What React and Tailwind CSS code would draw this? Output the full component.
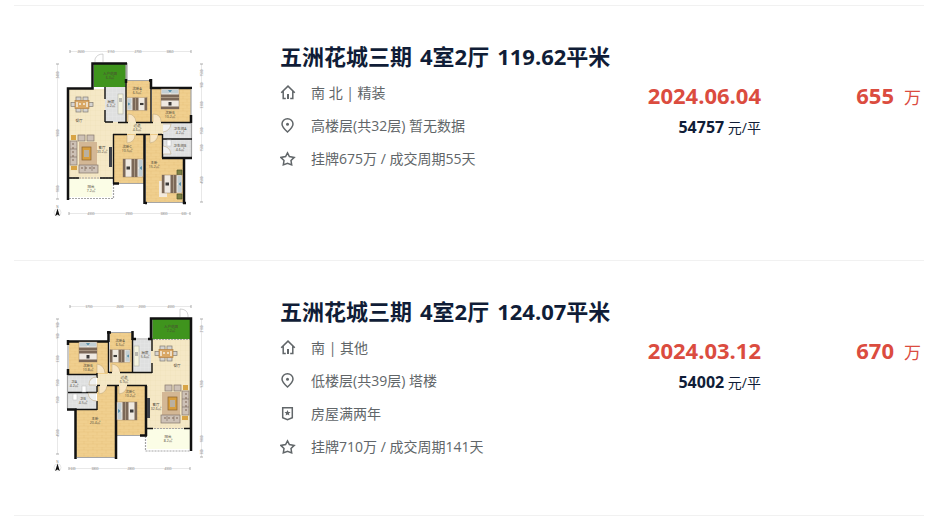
const WOOD = '#f0cf8e';
const FLOOR = '#f5e8c6';
const TILE = '#dfe0e0';
const WALL = '#111111';
const GLASS = '#a5a5a5';

const listings = [
    {
        id: 1,
        community: '五洲花城三期',
        layout: '4室2厅',
        area: '119.62平米',
        date: '2024.06.04',
        unitPrice: '54757',
        total: '655',
        plan: PlanEast,
        facts: [
            { icon: HomeIcon, text: '南 北 | 精装' },
            { icon: PinIcon, text: '高楼层(共32层) 暂无数据' },
            { icon: StarIcon, text: '挂牌675万 / 成交周期55天' },
        ],
    },
    {
        id: 2,
        community: '五洲花城三期',
        layout: '4室2厅',
        area: '124.07平米',
        date: '2024.03.12',
        unitPrice: '54002',
        total: '670',
        plan: PlanWest,
        facts: [
            { icon: HomeIcon, text: '南 | 其他' },
            { icon: PinIcon, text: '低楼层(共39层) 塔楼' },
            { icon: BadgeIcon, text: '房屋满两年' },
            { icon: StarIcon, text: '挂牌710万 / 成交周期141天' },
        ],
    },
];

function Icon({ children }) {
    return (
        <svg viewBox="0 0 16 16" className="h-4 w-4 shrink-0" fill="none" stroke="currentColor" strokeWidth="1.5" aria-hidden="true">
            {children}
        </svg>
    );
}

function HomeIcon() {
    return (
        <Icon>
            <path d="M1.2 7.7 8 1.1l6.800 6.600M3.2 6.300v7.100H5.800M10.200 13.400h2.600V6.300" />
            <path d="M8 9v5" strokeWidth="2" />
        </Icon>
    );
}

function PinIcon() {
    return (
        <Icon>
            <path d="M7.5 14C4.2 11 2 8.600 2 6a5.500 5.200 0 0 1 11 0c0 2.600-2.200 5-5.500 8Z" />
            <circle cx="7.5" cy="6.2" r="1.5" fill="currentColor" stroke="none" />
        </Icon>
    );
}

function BadgeIcon() {
    return (
        <Icon>
            <path d="M2.700 1.700h9.600v10L7.500 13.800l-4.800-2.100Z" />
            <path d="m7.500 4 .9 1.900 2.100.2-1.600 1.400.5 2.100-1.900-1.100-1.900 1.100.5-2.100-1.600-1.400 2.100-.2Z" fill="currentColor" stroke="none" />
        </Icon>
    );
}

function StarIcon() {
    return (
        <Icon>
            <path d="m7.500 1.900 1.900 3.700 4.800.8-3.200 3.100.7 4.400-4.200-1.500-4.200 1.500.7-4.400L.800 6.400l4.800-.8Z" />
        </Icon>
    );
}

// Bed with its head at the top, 18 x 20, turned around its own centre
function Bed({ x, y, turn = 0 }) {
    return (
        <g transform={`translate(${x} ${y}) rotate(${turn})`}>
            <rect x="-9" y="-10" width="18" height="20" fill="#efe9e1" stroke="#9a8468" strokeWidth="0.5" />
            <rect x="-8" y="-9.5" width="7" height="4" fill="#c3cfd4" />
            <rect x="1" y="-9.5" width="7" height="4" fill="#c3cfd4" />
            <path d="m-2-9 2 3 2-3Z" fill="#5c93ad" />
            <rect x="-9" y="-4.5" width="18" height="6" fill="#7b6858" />
            <rect x="-9" y="-2" width="18" height="1" fill="#a89682" />
            <rect x="-1.5" y="3" width="3" height="3.5" fill="#3c3a39" />
            <rect x="-9" y="7.5" width="18" height="2.5" fill="#7b6858" />
        </g>
    );
}

function Dining({ x, y }) {
    return (
        <g transform={`translate(${x} ${y})`} stroke="#827b72" strokeWidth="0.7">
            <rect x="-6" y="-8" width="5" height="15" fill="#d5d3d0" />
            <rect x="1" y="-8" width="5" height="15" fill="#d5d3d0" />
            <rect x="-11" y="-2.5" width="22" height="4" fill="#d5d3d0" />
            <rect x="-7" y="-4.5" width="14" height="8" fill="#d9a765" stroke="#b58144" />
            <path d="M-5-3v5M-3-1h2M1-1h2M5-3v5" stroke="#f5efe2" strokeWidth="1.5" />
        </g>
    );
}

// Sofa set with the long sofa on the left; flip puts it on the right
function Sofa({ x, y, flip }) {
    return (
        <g transform={`translate(${x} ${y}) scale(${flip ? -1 : 1} 1)`}>
            <rect x="-6" y="-12" width="18" height="30" fill="#d3b795" />
            <g fill="#cdc1b6" stroke="#85766a" strokeWidth="0.7">
                <rect x="-15" y="-13" width="7" height="24" />
                <path d="M-15-5h7M-15 3h7" />
                <rect x="-7" y="-19" width="7" height="6" />
                <rect x="2" y="-19" width="7" height="6" />
                <rect x="-6" y="11" width="19" height="8" />
                <path d="M0 12v5M7 12v5" />
            </g>
            <path d="M-12-11v20M-4 14H11" stroke="#7e6657" strokeWidth="1" strokeDasharray="2 2" />
            <rect x="-3" y="-7" width="9" height="13" fill="#d69d3e" stroke="#8b622c" strokeWidth="0.7" />
            <rect x="-1" y="-4" width="5" height="7" fill="#b9b0a0" />
            <rect x="-14" y="-19" width="5" height="5" fill="#d8a445" />
            <rect x="-14" y="12" width="6" height="4" fill="#d8a445" />
        </g>
    );
}

function Room({ x, y, w, h, fill }) {
    return <rect x={x} y={y} width={w} height={h} fill={fill} />;
}

function RoomLabel({ x, y, name, area }) {
    return (
        <text x={x} y={y} textAnchor="middle" fontSize="3.5" fill="#4b4436">
            {name}
            {area && <tspan x={x} dy="4">{area}</tspan>}
        </text>
    );
}

function PlanFrame({ label, tops, bottoms, lefts, rights, children }) {
    return (
        <svg viewBox="14 46 232 174" className="w-[232px] shrink-0" role="img" aria-label={label}>
            <defs>
                <pattern id="planks" width="9" height="6" patternUnits="userSpaceOnUse">
                    <rect width="9" height="6" fill={WOOD} />
                    <path d="M0 0h9M0 3h9M3 0v3M7 3v3" stroke="#e6bf76" strokeWidth="0.4" />
                </pattern>
                <pattern id="marble" width="5" height="5" patternUnits="userSpaceOnUse">
                    <rect width="5" height="5" fill={FLOOR} />
                    <path d="M0 0h5M0 0v5" stroke="#eddcb4" strokeWidth="0.4" />
                </pattern>
                <pattern id="tile" width="4" height="4" patternUnits="userSpaceOnUse">
                    <rect width="4" height="4" fill={TILE} />
                    <path d="M0 0h4M0 0v4" stroke="#ececec" strokeWidth="0.5" />
                </pattern>
            </defs>
            <g stroke="#d8d8d8" strokeWidth="0.6" fill="none">
                <path d="M70 51.5H191M69 213.5H190M57.5 64V199M201.5 64V202" />
                <path d="M70 50v3M191 50v3M69 212v3M190 212v3M56 64h3M56 199h3M200 64h3M200 202h3" stroke="#777" />
            </g>
            <g fontSize="3" fill="#777" textAnchor="middle">
                {tops.map(([x, t]) => <text key={x} x={x} y="52.5">{t}</text>)}
                {bottoms.map(([x, t]) => <text key={x} x={x} y="214.5">{t}</text>)}
                {lefts.map(([y, t]) => <text key={y} transform={`translate(58.5 ${y}) rotate(-90)`}>{t}</text>)}
                {rights.map(([y, t]) => <text key={y} transform={`translate(202.5 ${y}) rotate(-90)`}>{t}</text>)}
                <text x="57.5" y="207.5">N</text>
            </g>
            <circle cx="57.5" cy="212.5" r="3.5" fill="none" stroke="#cccccc" strokeWidth="0.5" />
            <path d="m57.5 208.5 2.3 7.5-2.3-1.5-2.3 1.5Z" fill="#111" />
            {children}
        </svg>
    );
}

function PlanEast() {
    return (
        <PlanFrame
            label="户型图"
            tops={[[81, '2600'], [111, '3150'], [138, '2700'], [170, '3860']]}
            bottoms={[[91, '4300'], [129, '2900'], [164, '3800'], [184, '600']]}
            lefts={[[75, '2400'], [133, '9000'], [189, '1800']]}
            rights={[[73, '1500'], [85, '900'], [105, '3300'], [131, '1500'], [148, '1500'], [180, '4500']]}
        >
            <Room x={69} y={89} w={57} h={90} fill="url(#marble)" />
            <Room x={112} y={122} w={51} h={12} fill="url(#marble)" />
            <Room x={94} y={64} w={33} h={23} fill="#3f941d" />
            <Room x={105} y={87} w={21} h={35} fill="url(#tile)" />
            <Room x={126} y={81} w={25} h={41} fill="url(#planks)" />
            <Room x={152} y={89} w={39} h={33} fill="url(#planks)" />
            <Room x={114} y={134} w={30} h={49} fill="url(#planks)" />
            <Room x={146} y={134} w={17} h={26} fill="url(#planks)" />
            <Room x={146} y={158} w={37} h={45} fill="url(#planks)" />
            <Room x={163} y={123} w={28} h={34} fill="url(#tile)" />
            <Room x={69} y={179} w={43} h={18} fill="#fbfde6" />

            <path d="M95 62v-3q2-5 8-5v8" fill="#fff" stroke="#b5b5b5" strokeWidth="0.6" />
            <g fill="none" stroke={GLASS} strokeWidth="1.2">
                <path d="M127 63V81M127 80.5h23M191 90v26M114 183.5h30M147 202.5h36M191.5 123v34M126 64v22" />
                <path d="M69 198.5h44M113.5 184v15M70 178h42" strokeDasharray="2 1" />
            </g>
            <g fill="none" stroke={WALL} strokeWidth="2.5">
                <path d="M68 200V88.5h24.5V63.5H127" />
                <path d="M126 79v4M151 79v10M149 80.5h3M151 88h41M191 115v8" />
                <path d="M144.5 134v70M113 183.5h6M145 203h2M184 204v-46M162 158h30M183 203h3" />
            </g>
            <g fill="none" stroke={WALL} strokeWidth="1.4">
                <path d="M105 87v12M105 110v12M126 80v42M105 122h8M118 122.5h10M136 122.5h17M161 122.5h30" />
                <path d="M151 89v33M113.5 134v50M113 134.5h14M136 134.5h10M146 134.5h4M158 134.5h4M162.5 134v24M162 139h30M69 178h10M100 178h13" />
            </g>
            <g fill="#fff" fillOpacity="0.5" stroke="#baa277" strokeWidth="0.5">
                <path d="M128 122v-8q7 0 8 8M153 122v-8q8 0 8 8M127 135v8q8-1 8-8M150 135v8q7-1 8-8M163 146q7 1 8 8h-8M163 132q7-1 8-8h-8" />
            </g>
            <rect x="118" y="94" width="5" height="20" fill="#f4f3df" stroke="#a9a79b" strokeWidth="0.5" />
            <rect x="119" y="98" width="3" height="4" fill="#b9b8b1" />
            <rect x="167" y="140" width="4" height="6" fill="#fff" stroke="#bbb" strokeWidth="0.5" />
            <rect x="109" y="147" width="3" height="20" fill="#3e4148" />
            <rect x="159" y="181" width="8" height="16" fill="#f3eadc" />
            <path d="M177 170h5v5h-5ZM177 194h5v5h-5Z" fill="#7c8146" stroke="#4d5428" strokeWidth="0.7" />

            <Dining x={82} y={105} />
            <Sofa x={85} y={154} />
            <Bed x={170} y={99} />
            <g transform="translate(137 104) scale(1 .7)"><Bed x={0} y={0} turn={-90} /></g>
            <Bed x={133} y={168} turn={90} />
            <Bed x={172} y={184} turn={90} />

            <RoomLabel x={110} y={75} name="入户花园" area="6.3㎡" />
            <RoomLabel x={111} y={103} name="厨房" area="6.2㎡" />
            <RoomLabel x={137} y={90} name="次卧A" area="6.5㎡" />
            <RoomLabel x={170} y={114} name="次卧B" area="10.2㎡" />
            <RoomLabel x={79} y={122} name="餐厅" />
            <RoomLabel x={137} y={127} name="过道" area="4.6㎡" />
            <RoomLabel x={180} y={130} name="卫生间A" area="4.2㎡" />
            <RoomLabel x={180} y={147} name="卫生间B" area="4.6㎡" />
            <RoomLabel x={102} y={149} name="客厅" area="30.2㎡" />
            <RoomLabel x={127} y={148} name="次卧C" area="10.5㎡" />
            <RoomLabel x={154} y={164} name="主卧" area="15.2㎡" />
            <RoomLabel x={91} y={188} name="阳台" area="7.2㎡" />
        </PlanFrame>
    );
}

function PlanWest() {
    return (
        <PlanFrame
            label="户型图"
            tops={[[89, '3700'], [120, '2600'], [142, '2000'], [171, '4000']]}
            bottoms={[[73, '600'], [95, '3800'], [131, '2800'], [168, '4300']]}
            lefts={[[70, '900'], [81, '900'], [104, '3300'], [128, '1500'], [145, '1500'], [178, '4500']]}
            rights={[[74, '2100'], [129, '9200'], [184, '1800'], [197, '300']]}
        >
            <Room x={151} y={84} w={39} h={90} fill="url(#marble)" />
            <Room x={97} y={117} w={55} h={15} fill="url(#marble)" />
            <Room x={147} y={130} w={8} h={44} fill="url(#marble)" />
            <Room x={152} y={64} w={38} h={20} fill="#3f941d" />
            <Room x={69} y={87} w={39} h={32} fill="url(#planks)" />
            <Room x={110} y={78} w={22} h={39} fill="url(#planks)" />
            <Room x={133} y={85} w={18} h={32} fill="url(#tile)" />
            <Room x={68} y={120} w={28} h={34} fill="url(#tile)" />
            <Room x={97} y={131} w={18} h={30} fill="url(#planks)" />
            <Room x={76} y={155} w={39} h={47} fill="url(#planks)" />
            <Room x={117} y={131} w={29} h={49} fill="url(#planks)" />
            <Room x={147} y={174} w={43} h={20} fill="#fbfde6" />

            <path d="M180 62v-8q7 0 8 6v2" fill="#fff" stroke="#b5b5b5" strokeWidth="0.6" />
            <g fill="none" stroke={GLASS} strokeWidth="1.2">
                <path d="M68 89v30M109 77.5h23M135 84h13M152 63v20M67.5 120v34M77 202.5h38M117 180.5h28" />
                <path d="M145.5 181v15H190M148 173.5h42M153 84.5h37" strokeDasharray="2 1" />
            </g>
            <g fill="none" stroke={WALL} strokeWidth="2.5">
                <path d="M67 86.5h42M108.5 76v11M68 85v5M68 114v6M107 77.5h4M132.5 76v9M133 84h3M148 84h4M151 85V63.5h40V196" />
                <path d="M67 154.5h8.500V204M116 131v73M140 180.5h7M146 131v50" />
            </g>
            <g fill="none" stroke={WALL} strokeWidth="1.4">
                <path d="M68 119.5h29M108.5 87v31M132.5 84v34M133 117.5h19M152 84v12M152 108v10M109 117.5h3M120 117.5h13" />
                <path d="M97 118v5M68 137.5h29M97 131v6M97 146v9M75 154.5h22M97 130.5h3M107 130.5h12M127 130.5h20M147 173.5h6M184 173.5h6" />
            </g>
            <g fill="#fff" fillOpacity="0.5" stroke="#baa277" strokeWidth="0.5">
                <path d="M97 118v-9q7 1 8 9M112 117v-8q7 1 8 8M97 122q-8 0-8 8h8M97 146q-8 0-9-8h9M99 131v8q7-1 8-8M119 131v8q7-1 8-8" />
            </g>
            <rect x="134" y="91" width="5" height="20" fill="#f4f3df" stroke="#a9a79b" strokeWidth="0.5" />
            <rect x="135" y="97" width="3" height="4" fill="#b9b8b1" />
            <rect x="82" y="131" width="4" height="6" fill="#fff" stroke="#bbb" strokeWidth="0.5" />
            <rect x="73" y="139" width="4" height="6" fill="#fff" stroke="#bbb" strokeWidth="0.5" />
            <rect x="147" y="143" width="3" height="20" fill="#3e4148" />

            <Dining x={166} y={99} />
            <Sofa x={174} y={149} flip />
            <Bed x={88} y={97} />
            <g transform="translate(120 101) scale(1 .7)"><Bed x={0} y={0} turn={90} /></g>
            <Bed x={127} y={156} turn={-90} />

            <RoomLabel x={171} y={73} name="入户花园" area="7.2㎡" />
            <RoomLabel x={145} y={99} name="厨房" area="5.6㎡" />
            <RoomLabel x={120} y={87} name="次卧A" area="6.5㎡" />
            <RoomLabel x={88} y={112} name="次卧B" area="10.8㎡" />
            <RoomLabel x={177} y={112} name="餐厅" />
            <RoomLabel x={124} y={124} name="过道" area="6.9㎡" />
            <RoomLabel x={74} y={128} name="卫A" area="4.2㎡" />
            <RoomLabel x={83} y={145} name="卫B" area="4.5㎡" />
            <RoomLabel x={156} y={151} name="客厅" area="32.6㎡" />
            <RoomLabel x={130} y={138} name="次卧C" area="10.2㎡" />
            <RoomLabel x={95} y={165} name="主卧" area="20.4㎡" />
            <RoomLabel x={168} y={183} name="阳台" area="8.2㎡" />
        </PlanFrame>
    );
}

function ListingRow({ item }) {
    const Plan = item.plan;

    return (
        <li className="flex border-b border-[#f1f1f1] py-10 pr-[3px]">
            <Plan />
            <div className="ml-[34px] min-w-0 flex-1">
                <h2 className="text-[22px] leading-5 font-bold whitespace-nowrap text-[#101d37]">
                    <a href="#" className="flex gap-2">
                        <span>{item.community}</span>
                        <span>{item.layout}</span>
                        <span>{item.area}</span>
                    </a>
                </h2>
                <ul className="mt-2.5 text-sm text-[#616669]">
                    {item.facts.map(({ icon: FactIcon, text }) => (
                        <li key={text} className="flex h-[33px] items-center gap-[15px]">
                            <FactIcon />
                            <span>{text}</span>
                        </li>
                    ))}
                </ul>
            </div>
            <div className="pt-[33px] text-right">
                <div className="text-[22px] leading-8 font-bold text-[#db4c3f]">{item.date}</div>
                <div className="text-sm leading-8 text-[#101d37]">
                    <span className="text-base leading-8 font-bold">{item.unitPrice}</span> 元/平
                </div>
            </div>
            <div className="flex w-[160px] items-baseline justify-end gap-[10px] pt-[33px] text-[#db4c3f]">
                <span className="text-[22px] leading-8 font-bold">{item.total}</span>
                <span className="text-[17px] leading-8">万</span>
            </div>
        </li>
    );
}

export default function App() {
    return (
        <main className="bg-white pt-[5px] pr-[10px] pl-[14px] font-['Open_Sans','Noto_Sans_CJK_SC',sans-serif]">
            <ul className="border-t border-[#f1f1f1]">
                {listings.map((item) => (
                    <ListingRow key={item.id} item={item} />
                ))}
            </ul>
        </main>
    );
}
